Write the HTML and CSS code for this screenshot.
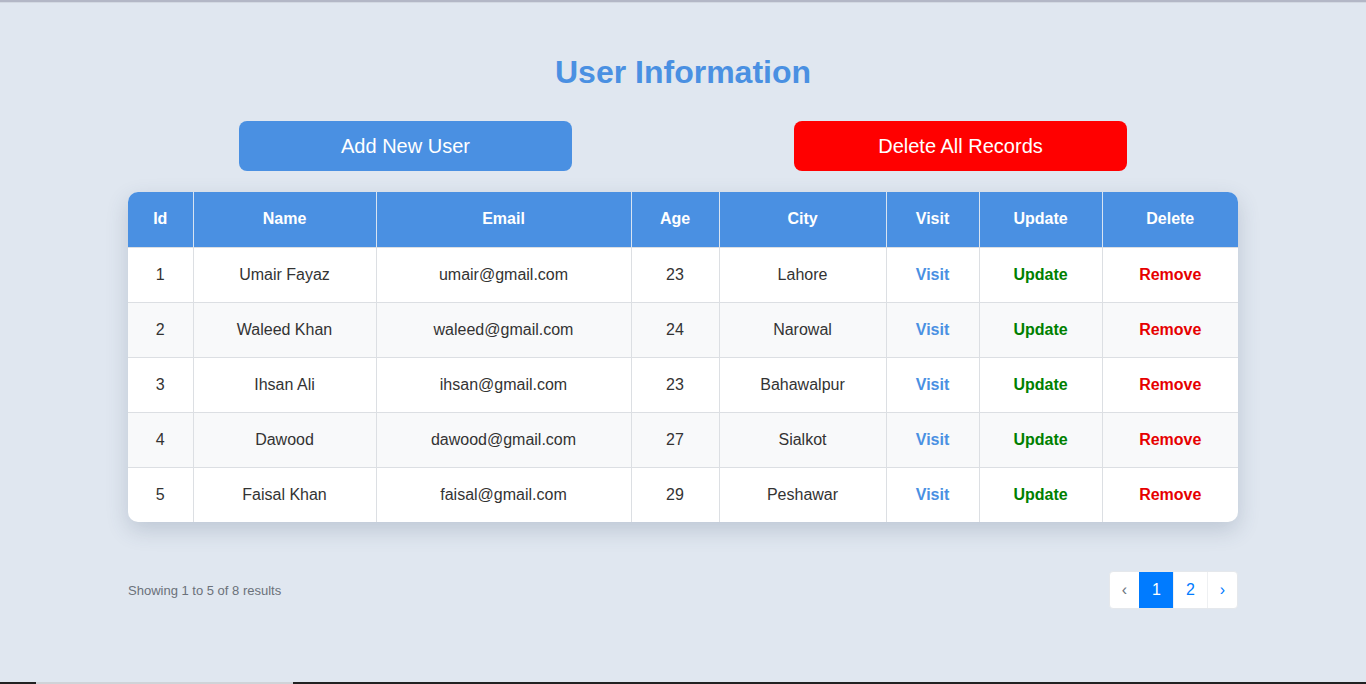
FILE: index.html
```html
<!DOCTYPE html>
<html lang="en">
<head>
<meta charset="utf-8">
<title>User Information</title>
<link rel="stylesheet" href="styles.css">
</head>
<body>
<div class="topbar"></div>
<div class="container">
  <h1 class="title">User Information</h1>
  <div class="actions">
    <div class="action-col"><button class="btn btn-add">Add New User</button></div>
    <div class="action-col"><button class="btn btn-delete">Delete All Records</button></div>
  </div>
  <div class="table-wrap">
    <table class="users">
      <colgroup>
        <col class="c-id"><col class="c-name"><col class="c-email"><col class="c-age"><col class="c-city"><col class="c-visit"><col class="c-update"><col class="c-delete">
      </colgroup>
      <thead>
        <tr><th>Id</th><th>Name</th><th>Email</th><th>Age</th><th>City</th><th>Visit</th><th>Update</th><th>Delete</th></tr>
      </thead>
      <tbody>
        <tr><td>1</td><td>Umair Fayaz</td><td>umair@gmail.com</td><td>23</td><td>Lahore</td><td><a class="l-visit">Visit</a></td><td><a class="l-update">Update</a></td><td><a class="l-remove">Remove</a></td></tr>
        <tr><td>2</td><td>Waleed Khan</td><td>waleed@gmail.com</td><td>24</td><td>Narowal</td><td><a class="l-visit">Visit</a></td><td><a class="l-update">Update</a></td><td><a class="l-remove">Remove</a></td></tr>
        <tr><td>3</td><td>Ihsan Ali</td><td>ihsan@gmail.com</td><td>23</td><td>Bahawalpur</td><td><a class="l-visit">Visit</a></td><td><a class="l-update">Update</a></td><td><a class="l-remove">Remove</a></td></tr>
        <tr><td>4</td><td>Dawood</td><td>dawood@gmail.com</td><td>27</td><td>Sialkot</td><td><a class="l-visit">Visit</a></td><td><a class="l-update">Update</a></td><td><a class="l-remove">Remove</a></td></tr>
        <tr><td>5</td><td>Faisal Khan</td><td>faisal@gmail.com</td><td>29</td><td>Peshawar</td><td><a class="l-visit">Visit</a></td><td><a class="l-update">Update</a></td><td><a class="l-remove">Remove</a></td></tr>
      </tbody>
    </table>
  </div>
  <div class="footer">
    <div class="showing">Showing 1 to 5 of 8 results</div>
    <ul class="pagination">
      <li class="page prev">&lsaquo;</li>
      <li class="page active">1</li>
      <li class="page">2</li>
      <li class="page next">&rsaquo;</li>
    </ul>
  </div>
</div>
<div class="bottombar"><div class="bottombar-seg"></div></div>
</body>
</html>
```

FILE: styles.css
```css
* { box-sizing: border-box; }
html, body { margin: 0; padding: 0; }
body {
  background: #e0e7f0;
  font-family: "Liberation Sans", Arial, sans-serif;
  color: #333;
  height: 684px;
  overflow: hidden;
}
.topbar {
  height: 3px;
  background: #b3b7c6;
  border-bottom: 1px solid #d3d9e2;
}
.container {
  width: 1140px;
  margin: 0 auto;
  padding: 50px 15px 0;
}
.title {
  margin: 0;
  text-align: center;
  font-size: 32px;
  line-height: 38px;
  font-weight: bold;
  color: #4a90e2;
}
.actions {
  display: flex;
  margin-top: 30px;
}
.action-col {
  flex: 1;
  display: flex;
  justify-content: center;
}
.btn {
  width: 333px;
  height: 50px;
  border: none;
  border-radius: 8px;
  color: #fff;
  font-family: "Liberation Sans", Arial, sans-serif;
  font-size: 20px;
  cursor: pointer;
}
.btn-add { background: #4a90e2; }
.btn-delete { background: #ff0000; }
.table-wrap {
  margin-top: 21px;
  border-radius: 10px;
  overflow: hidden;
  background: #fff;
  box-shadow: 0 8px 22px rgba(50, 70, 100, 0.2);
}
.users {
  width: 100%;
  border-collapse: collapse;
  table-layout: fixed;
}
.c-id { width: 65px; }
.c-name { width: 183px; }
.c-email { width: 255px; }
.c-age { width: 88px; }
.c-city { width: 167px; }
.c-visit { width: 93px; }
.c-update { width: 123px; }
.c-delete { width: 136px; }
.users th, .users td {
  text-align: center;
  font-size: 16px;
  border: 1px solid #dcdfe3;
}
.users tr > :first-child { border-left: none; }
.users tr > :last-child { border-right: none; }
.users thead tr th { border-top: none; }
.users tbody tr:last-child td { border-bottom: none; }
.users th {
  background: #4a90e2;
  color: #fff;
  font-weight: bold;
  height: 55px;
  border-color: #d8e4f2;
  border-bottom: 1px solid #dcdfe3;
}
.users td {
  height: 55px;
  color: #333;
}
.users tbody tr:nth-child(even) td { background: #f8f9fa; }
.l-visit, .l-update, .l-remove { font-weight: bold; text-decoration: none; }
.l-visit { color: #4a90e2; }
.l-update { color: #008000; }
.l-remove { color: #e60000; }
.footer {
  display: flex;
  justify-content: space-between;
  align-items: center;
  margin-top: 49px;
}
.showing {
  font-size: 13px;
  color: #6b717a;
}
.pagination {
  display: flex;
  list-style: none;
  margin: 0;
  padding: 0;
  border-radius: 4px;
  overflow: hidden;
  background: #fff;
  border: 1px solid #e5e8ec;
}
.page {
  height: 36px;
  display: flex;
  align-items: center;
  justify-content: center;
  font-size: 16px;
  color: #007bff;
  width: 34px;
  border-left: 1px solid #eef0f2;
}
.page:first-child { border-left: none; }
.prev { width: 29px; color: #6c757d; }
.next { width: 30px; }
.page.active { background: #007bff; color: #fff; border-left-color: #007bff; }
.bottombar {
  position: fixed;
  left: 0;
  right: 0;
  bottom: 0;
  height: 2px;
  background: #222;
}
.bottombar-seg {
  margin-left: 36px;
  width: 257px;
  height: 2px;
  background: #d0d3d8;
}
```
